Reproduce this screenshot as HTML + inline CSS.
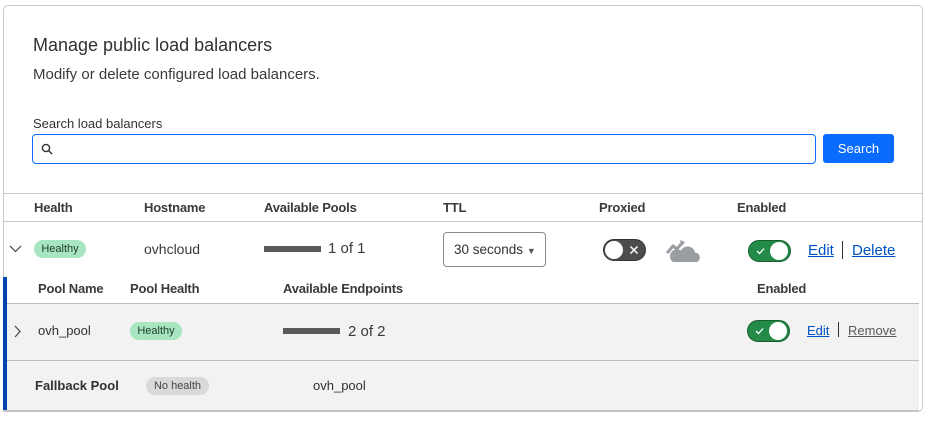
<!DOCTYPE html>
<html><head><style>
*{box-sizing:border-box;margin:0;padding:0}
body{width:933px;height:422px;background:#fff;font-family:"Liberation Sans",sans-serif;color:#313131;position:relative;overflow:hidden}
.a{position:absolute;white-space:nowrap}
.card{position:absolute;left:3px;top:5px;width:920px;height:407px;border:1px solid #c8c8c8;border-radius:5px}
.h{font-size:13px;font-weight:bold;color:#3a3a3a;letter-spacing:-0.2px}
.line{position:absolute;height:1px;background:#c8c8c8}
.badge{position:absolute;height:18px;border-radius:9px;background:#a7e6c1;font-size:11px;line-height:18px;text-align:center;color:#1d3b2a}
.bar{position:absolute;height:6px;background:#595959}
.tog{position:absolute;width:43px;height:22px;border-radius:11px}
.knob{position:absolute;top:2px;width:18px;height:18px;border-radius:50%;background:#fff}
a{color:#0051c3;text-decoration:underline}
</style></head><body>
<div class="card"></div>
<div class="a" style="left:33px;top:35px;font-size:18px;color:#313131">Manage public load balancers</div>
<div class="a" style="left:33px;top:66px;font-size:15px;color:#3a3a3a">Modify or delete configured load balancers.</div>
<div class="a" style="left:33px;top:116px;font-size:13px">Search load balancers</div>
<div class="a" style="left:32px;top:134px;width:784px;height:30px;border:1px solid #0a6cff;border-radius:4px"></div>
<svg class="a" style="left:41px;top:143px" width="13" height="13" viewBox="0 0 13 13"><circle cx="5" cy="5" r="3.6" fill="none" stroke="#313131" stroke-width="1.4"/><path d="M7.6 7.6L11 11" stroke="#313131" stroke-width="1.5"/></svg>
<div class="a" style="left:823px;top:134px;width:71px;height:29px;background:#0a6cff;border-radius:3px;color:#fff;font-size:13px;line-height:29px;text-align:center">Search</div>

<div class="line" style="left:3px;top:193px;width:920px"></div>
<div class="a h" style="left:34px;top:200px">Health</div>
<div class="a h" style="left:144px;top:200px">Hostname</div>
<div class="a h" style="left:264px;top:200px">Available Pools</div>
<div class="a h" style="left:443px;top:200px">TTL</div>
<div class="a h" style="left:599px;top:200px">Proxied</div>
<div class="a h" style="left:737px;top:200px">Enabled</div>
<div class="line" style="left:3px;top:221px;width:920px"></div>

<svg class="a" style="left:9px;top:244px" width="13" height="9"><path d="M1 2l5.5 5.5L12 2" fill="none" stroke="#444" stroke-width="1.2"/></svg>
<div class="badge" style="left:34px;top:240px;width:52px">Healthy</div>
<div class="a" style="left:144px;top:241px;font-size:14px;color:#3a3a3a">ovhcloud</div>
<div class="bar" style="left:264px;top:246px;width:57px"></div>
<div class="a" style="left:328px;top:240px;font-size:15px;color:#3a3a3a">1 of 1</div>
<div class="a" style="left:443px;top:232px;width:103px;height:35px;border:1px solid #8a8a8a;border-radius:4px;font-size:13.5px;line-height:33px;padding-left:10px;color:#313131">30 seconds <span style="font-size:9px;color:#555">▼</span></div>
<div class="tog" style="left:603px;top:239px;background:#4d4d4d;border:1.5px solid #333"><div class="knob" style="left:1px;top:1px"></div><svg class="a" style="left:25px;top:5px" width="10" height="10"><path d="M1.5 1.5l7 7M8.5 1.5l-7 7" stroke="#fff" stroke-width="1.5"/></svg></div>
<svg class="a" style="left:665px;top:238px" width="35" height="26" viewBox="0 0 35 26"><path d="M8 24h24a5 5 0 0 0-2-9.5 7.5 7.5 0 0 0-14-2 5.5 5.5 0 0 0-8 11.5z" fill="#9a9ea3"/><path d="M2 15l6-7 4 3 5-6" fill="none" stroke="#9a9ea3" stroke-width="3"/><path d="M15 2l5 2-3 4z" fill="#9a9ea3"/></svg>
<div class="tog" style="left:748px;top:240px;background:#238a47;border:1.5px solid #1a5c31"><svg class="a" style="left:7px;top:6px" width="9" height="8"><path d="M1 4l2.5 2.5L8 1.5" fill="none" stroke="#fff" stroke-width="1.3"/></svg><div class="knob" style="left:21px;top:1px"></div></div>
<a class="a" style="left:808px;top:242px;font-size:15px">Edit</a>
<div class="a" style="left:842px;top:241px;width:1px;height:18px;background:#313131"></div>
<a class="a" style="left:852px;top:242px;font-size:15px">Delete</a>

<div class="a" style="left:3px;top:277px;width:4px;height:135px;background:#0045ad"></div>
<div class="a h" style="left:38px;top:281px">Pool Name</div>
<div class="a h" style="left:130px;top:281px">Pool Health</div>
<div class="a h" style="left:283px;top:281px">Available Endpoints</div>
<div class="a h" style="left:757px;top:281px">Enabled</div>
<div class="a" style="left:7px;top:303px;width:912px;height:108px;background:#f2f2f2"></div>
<div class="line" style="left:7px;top:303px;width:912px;background:#bdbdbd"></div>
<div class="line" style="left:7px;top:360px;width:912px;background:#bdbdbd"></div>
<div class="line" style="left:3px;top:410px;width:916px;height:2px;background:#c4c4c4"></div>
<svg class="a" style="left:13px;top:325px" width="9" height="13"><path d="M2 1l5 5.5L2 12" fill="none" stroke="#444" stroke-width="1.2"/></svg>
<div class="a" style="left:38px;top:323px;font-size:13px">ovh_pool</div>
<div class="badge" style="left:130px;top:322px;width:52px">Healthy</div>
<div class="bar" style="left:283px;top:328px;width:57px"></div>
<div class="a" style="left:348px;top:323px;font-size:15px;color:#3a3a3a">2 of 2</div>
<div class="tog" style="left:747px;top:320px;background:#238a47;border:1.5px solid #1a5c31"><svg class="a" style="left:7px;top:6px" width="9" height="8"><path d="M1 4l2.5 2.5L8 1.5" fill="none" stroke="#fff" stroke-width="1.3"/></svg><div class="knob" style="left:21px;top:1px"></div></div>
<a class="a" style="left:807px;top:323px;font-size:13px">Edit</a>
<div class="a" style="left:838px;top:322px;width:1px;height:15px;background:#313131"></div>
<a class="a" style="left:848px;top:323px;font-size:13px;color:#595959">Remove</a>
<div class="a" style="left:35px;top:378px;font-size:13px;font-weight:bold">Fallback Pool</div>
<div class="badge" style="left:146px;top:377px;width:63px;background:#d9d9d9;color:#444">No health</div>
<div class="a" style="left:313px;top:378px;font-size:13px">ovh_pool</div>
</body></html>
